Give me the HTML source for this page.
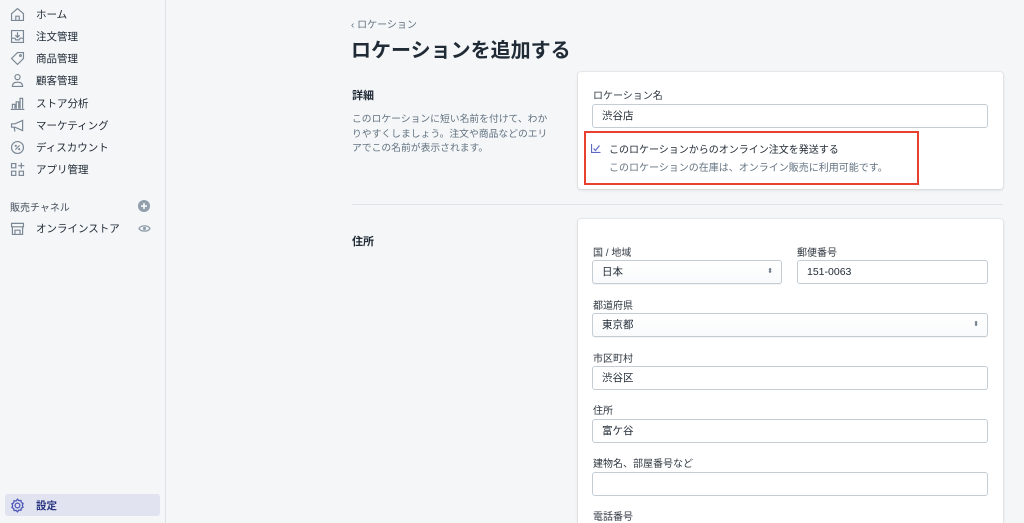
<!DOCTYPE html>
<html><head><meta charset="utf-8"><style>
*{margin:0;padding:0;box-sizing:border-box}
html{width:1024px;height:523px;overflow:hidden}
body{width:1024px;height:523px;overflow:hidden;background:#f4f6f8;font-family:"Liberation Sans","Noto Sans CJK JP",sans-serif;color:#212b36;position:relative}
.sb{position:absolute;left:0;top:0;width:166px;height:523px;background:#f4f6f8;border-right:1px solid #dfe3e8}
.ni{position:absolute;left:0;height:22px;display:flex;align-items:center;font-size:10.5px;color:#212b36}
.ni svg{position:absolute;left:9px;width:17px;height:17px}
.ni span{position:absolute;left:36px;white-space:nowrap}
.a{position:absolute;white-space:nowrap}
.card{position:absolute;left:578px;width:425px;background:#fff;border-radius:3px;box-shadow:0 0 0 1px rgba(63,63,68,.05),0 1px 3px rgba(63,63,68,.15)}
.lbl{position:absolute;font-size:10px;color:#303841;white-space:nowrap}
.inp{position:absolute;height:24px;border:1px solid #c4cdd5;border-radius:3px;background:#fff;font-size:10.5px;padding-left:9px;line-height:22px;color:#212b36}
.sel{background:linear-gradient(#fff,#f9fafb);box-shadow:0 1px 0 rgba(22,29,37,.05)}
.arr{position:absolute;right:8px;top:0;font-size:7px;color:#637381;line-height:22px}
</style></head><body>
<div class="sb">
 <div class="ni" style="top:3px"><svg viewBox="0 0 20 20" fill="none" stroke="#7a8794" stroke-width="1.4"><path d="M3 9 10 3l7 6v8H3z M8 17v-5h4v5"/></svg><span>ホーム</span></div>
 <div class="ni" style="top:25px"><svg viewBox="0 0 20 20" fill="none" stroke="#7a8794" stroke-width="1.4"><path d="M3 3h14v14H3z M3 12h4l1 2h4l1-2h4 M10 5v6 M7.5 8.5 10 11l2.5-2.5"/></svg><span>注文管理</span></div>
 <div class="ni" style="top:47px"><svg viewBox="0 0 20 20" fill="none" stroke="#7a8794" stroke-width="1.4"><path d="M10 3h7v7l-7 7-7-7z"/><circle cx="13.5" cy="6.5" r="1"/></svg><span>商品管理</span></div>
 <div class="ni" style="top:69px"><svg viewBox="0 0 20 20" fill="none" stroke="#7a8794" stroke-width="1.4"><circle cx="10" cy="6" r="3"/><path d="M4 17c0-4 3-5 6-5s6 1 6 5z"/></svg><span>顧客管理</span></div>
 <div class="ni" style="top:92px"><svg viewBox="0 0 20 20" fill="none" stroke="#7a8794" stroke-width="1.4"><path d="M2 17h16 M4 16v-5h3v5 M8.5 16V8h3v8 M13 16V4h3v12"/></svg><span>ストア分析</span></div>
 <div class="ni" style="top:114px"><svg viewBox="0 0 20 20" fill="none" stroke="#7a8794" stroke-width="1.4"><path d="M3 8h4l9-4v12l-9-4H3z M6 12l1 5"/></svg><span>マーケティング</span></div>
 <div class="ni" style="top:136px"><svg viewBox="0 0 20 20" fill="none" stroke="#7a8794" stroke-width="1.4"><circle cx="10" cy="10" r="7"/><path d="M7.5 12.5l5-5"/><circle cx="8" cy="8" r=".6"/><circle cx="12" cy="12" r=".6"/></svg><span>ディスカウント</span></div>
 <div class="ni" style="top:158px"><svg viewBox="0 0 20 20" fill="none" stroke="#7a8794" stroke-width="1.4"><path d="M3 3h5v5H3z M3 12h5v5H3z M12 12h5v5h-5z M14.5 2v7 M11 5.5h7"/></svg><span>アプリ管理</span></div>
 <div class="a" style="left:10px;top:199px;font-size:10px;color:#454f5b">販売チャネル</div>
 <svg class="a" style="left:138px;top:200px" width="12" height="12" viewBox="0 0 12 12"><circle cx="6" cy="6" r="6" fill="#919eab"/><path d="M6 3v6M3 6h6" stroke="#fff" stroke-width="1.5"/></svg>
 <div class="ni" style="top:217px"><svg viewBox="0 0 20 20" fill="none" stroke="#7a8794" stroke-width="1.4"><path d="M3 4h14v4H3z M4 8v9h12V8 M7 17v-5h6v5"/></svg><span>オンラインストア</span></div>
 <svg class="a" style="left:138px;top:224px" width="13" height="9" viewBox="0 0 13 9"><path d="M1 4.5C3 1 10 1 12 4.5 10 8 3 8 1 4.5z" fill="none" stroke="#919eab" stroke-width="1.3"/><circle cx="6.5" cy="4.5" r="1.6" fill="#919eab"/></svg>
 <div class="a" style="left:5px;top:494px;width:155px;height:22px;background:#e1e4f0;border-radius:3px"></div>
 <div class="ni" style="top:494px;color:#2b3480;font-weight:bold"><svg viewBox="0 0 20 20" fill="none" stroke="#4b57b8" stroke-width="1.5"><circle cx="10" cy="10" r="2.8"/><path d="M10 2.5l1.6 1.8 2.4-.3.5 2.4 2.1 1.2-1 2.2 1 2.2-2.1 1.2-.5 2.4-2.4-.3L10 17.5l-1.6-1.8-2.4.3-.5-2.4-2.1-1.2 1-2.2-1-2.2 2.1-1.2.5-2.4 2.4.3z"/></svg><span>設定</span></div>
</div>

<div class="a" style="left:351px;top:16px;font-size:10px;color:#637381">‹ ロケーション</div>
<div class="a" style="left:351px;top:34px;font-size:20px;font-weight:bold;color:#212b36">ロケーションを追加する</div>
<div class="a" style="left:352px;top:87px;font-size:11px;font-weight:bold">詳細</div>
<div class="a" style="left:352px;top:113px;font-size:9.8px;color:#637381;line-height:14.5px;white-space:normal;width:202px">このロケーションに短い名前を付けて、わかりやすくしましょう。注文や商品などのエリアでこの名前が表示されます。</div>

<div class="card" style="top:72px;height:117px">
 <div class="lbl" style="left:15px;top:15px">ロケーション名</div>
 <div class="inp" style="left:14px;top:32px;width:396px;height:24px">渋谷店</div>
 <div class="a" style="left:6px;top:59px;width:335px;height:54px;border:2px solid #e8412f"></div>
 <svg class="a" style="left:13px;top:71px" width="10" height="10" viewBox="0 0 10 10" fill="none" stroke="#5c6ac4" stroke-width="1.2"><path d="M.5 1v8.5H9.5 M2.5 5.5l2 2 4-5"/></svg>
 <div class="a" style="left:31px;top:69px;font-size:10px;color:#212b36">このロケーションからのオンライン注文を発送する</div>
 <div class="a" style="left:31px;top:87px;font-size:10px;color:#637381">このロケーションの在庫は、オンライン販売に利用可能です。</div>
</div>

<div class="a" style="left:352px;top:204px;width:651px;height:1px;background:#dfe3e8"></div>
<div class="a" style="left:352px;top:233px;font-size:11px;font-weight:bold">住所</div>

<div class="card" style="top:219px;height:304px;border-radius:3px 3px 0 0">
 <div class="lbl" style="left:15px;top:25px">国 / 地域</div>
 <div class="inp sel" style="left:14px;top:41px;width:190px">日本<span class="arr">⬍</span></div>
 <div class="lbl" style="left:219px;top:25px">郵便番号</div>
 <div class="inp" style="left:219px;top:41px;width:191px">151-0063</div>
 <div class="lbl" style="left:15px;top:78px">都道府県</div>
 <div class="inp sel" style="left:14px;top:94px;width:396px">東京都<span class="arr">⬍</span></div>
 <div class="lbl" style="left:15px;top:131px">市区町村</div>
 <div class="inp" style="left:14px;top:147px;width:396px">渋谷区</div>
 <div class="lbl" style="left:15px;top:183px">住所</div>
 <div class="inp" style="left:14px;top:200px;width:396px">富ケ谷</div>
 <div class="lbl" style="left:15px;top:236px">建物名、部屋番号など</div>
 <div class="inp" style="left:14px;top:253px;width:396px"></div>
 <div class="lbl" style="left:15px;top:289px">電話番号</div>
</div>
</body></html>
